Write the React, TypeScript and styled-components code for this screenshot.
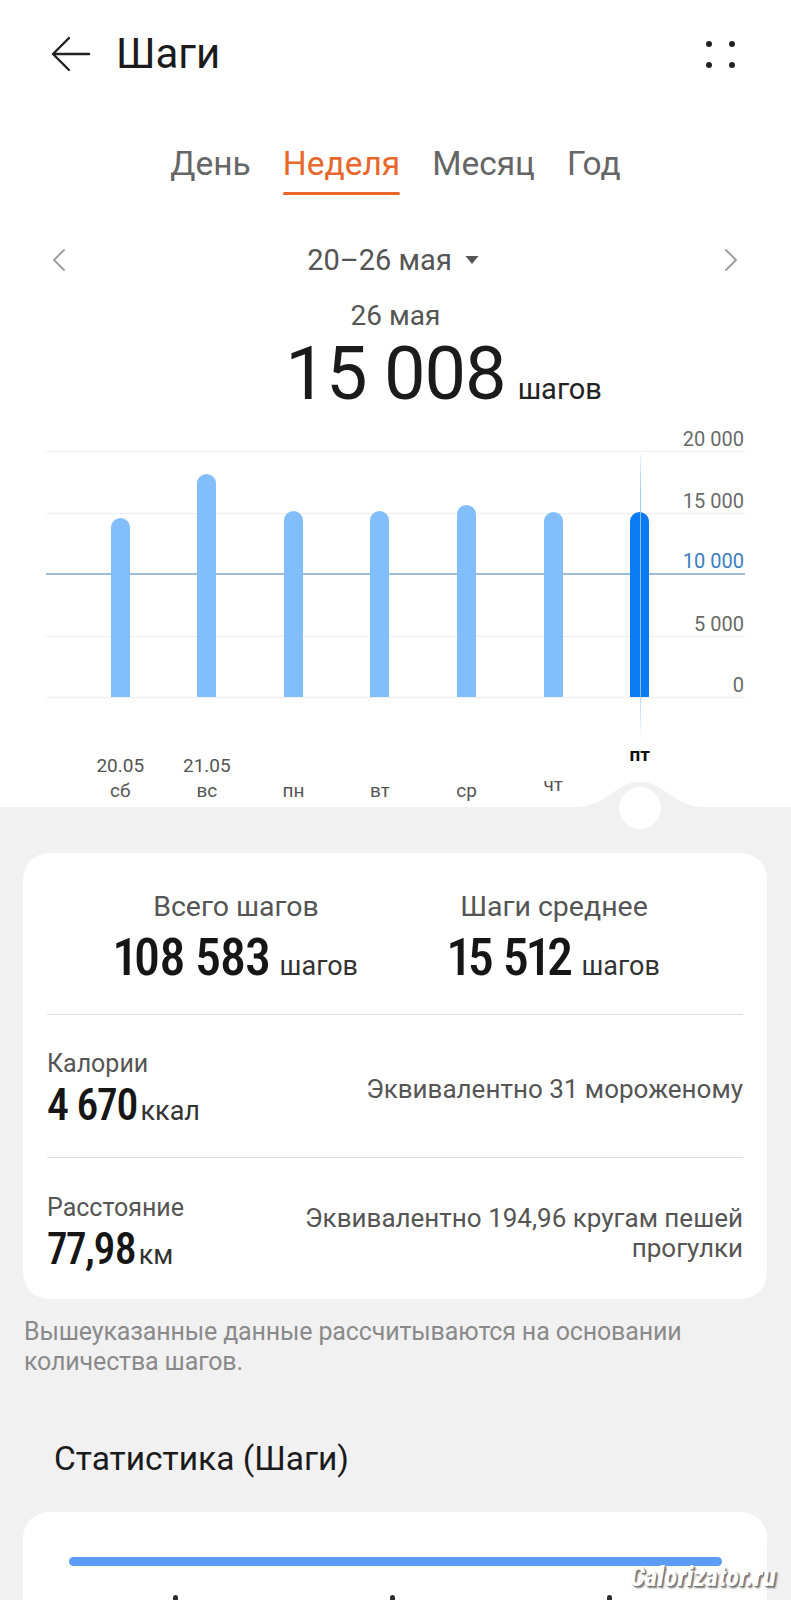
import React from "react";
import styled, { createGlobalStyle } from "styled-components";

const GlobalStyle = createGlobalStyle`
  html, body {
    margin: 0;
    padding: 0;
    overflow: hidden;
    background: #f1f1f1;
  }
  body {
    font-family: Roboto, "Noto Sans", sans-serif;
    color: #222;
  }
  * { box-sizing: border-box; }
`;

const Page = styled.div`
  width: 791px;
  height: 1600px;
  position: relative;
  overflow: hidden;
`;

const Top = styled.section`
  background: #fff;
  display: flex;
  flex-direction: column;
`;

const Header = styled.header`
  height: 108px;
  display: flex;
  align-items: center;
  padding: 0 56px 0 51px;
`;

const Title = styled.h1`
  margin: 0 0 0 25px;
  font-size: 42px;
  line-height: 52px;
  font-weight: 400;
  color: #1b1b1b;
  flex: 1;
`;

const Tabs = styled.nav`
  margin-top: 35px;
  display: flex;
  justify-content: center;
  gap: 32px;
`;

const Tab = styled.div<{ $active?: boolean }>`
  font-size: 33.5px;
  line-height: 41px;
  color: ${(p) => (p.$active ? "#e8672c" : "#666")};
  &::after {
    content: "";
    display: block;
    height: 3px;
    margin-top: 8px;
    border-radius: 2px;
    background: ${(p) => (p.$active ? "#e8672c" : "transparent")};
  }
`;

const DateNav = styled.div`
  margin-top: 45px;
  height: 40px;
  display: flex;
  align-items: center;
  justify-content: space-between;
  padding: 0 54px 0 53px;
`;

const Range = styled.div`
  display: flex;
  align-items: center;
  gap: 13px;
  font-size: 29px;
  color: #555;
  margin-right: 4px;
`;

const DayLabel = styled.div`
  margin-top: 18px;
  text-align: center;
  font-size: 28px;
  line-height: 36px;
  color: #555;
`;

const BigRow = styled.div`
  display: grid;
  grid-template-columns: 1fr auto 1fr;
  align-items: baseline;
`;

const BigNumber = styled.span`
  grid-column: 2;
  font-size: 74px;
  line-height: 80px;
  font-weight: 400;
  color: #1b1b1b;
  letter-spacing: -1px;
`;

const BigUnit = styled.span`
  font-size: 29px;
  color: #222;
  margin-left: 12px;
`;

const ChartSection = styled.div`
  position: relative;
  margin-top: 14px;
  padding: 0 46px;
`;

const ChartArea = styled.div`
  position: relative;
  display: flex;
  flex-direction: column;
`;

const GridRow = styled.div<{ $h: number; $accent?: boolean }>`
  height: ${(p) => p.$h}px;
  display: flex;
  justify-content: flex-end;
  align-items: flex-end;
  border-bottom: ${(p) => (p.$accent ? "2px solid #9fbdd4" : "1px solid #efefef")};
  font-size: 20px;
  line-height: 24px;
  color: ${(p) => (p.$accent ? "#3b7dc0" : "#6a6a6a")};
  padding-right: 1px;
`;

const Bars = styled.div`
  position: absolute;
  left: 31px;
  right: 62px;
  bottom: 1px;
  top: 0;
  display: grid;
  grid-template-columns: repeat(7, 1fr);
  align-items: end;
  justify-items: center;
`;

const Bar = styled.div<{ $selected?: boolean }>`
  width: 19px;
  border-radius: 9.5px 9.5px 0 0;
  background: ${(p) => (p.$selected ? "#0a7bf2" : "#82bdfc")};
`;

const Indicator = styled.div`
  position: absolute;
  left: 640px;
  top: 26px;
  width: 1px;
  height: 286px;
  background: linear-gradient(
    to bottom,
    rgba(150, 200, 245, 0.15) 0%,
    rgba(150, 200, 245, 0.9) 12%,
    rgba(150, 200, 245, 0.9) 82%,
    rgba(150, 200, 245, 0) 100%
  );
`;

const LabelRow = styled.div`
  height: 109px;
  padding: 0 62px 0 31px;
  display: grid;
  grid-template-columns: repeat(7, 1fr);
  align-items: end;
`;

const LabelCol = styled.div<{ $lift: number; $selected?: boolean }>`
  display: flex;
  flex-direction: column;
  align-items: center;
  margin-bottom: ${(p) => 4 + p.$lift}px;
  font-size: 19px;
  line-height: 25px;
  color: ${(p) => (p.$selected ? "#111" : "#555")};
  font-weight: ${(p) => (p.$selected ? 700 : 400)};
`;

const Gray = styled.section`
  position: relative;
  padding: 46px 24px 0 23px;
  display: flex;
  flex-direction: column;
`;

const Knob = styled.svg`
  position: absolute;
  left: 575px;
  top: -27px;
`;

const Card = styled.div`
  background: #fff;
  border-radius: 26px;
  padding: 0 24px;
  position: relative;
`;

const TopStats = styled.div`
  height: 162px;
  padding-top: 37px;
  display: flex;
  justify-content: center;
  border-bottom: 1px solid #dedede;
`;

const StatCol = styled.div`
  width: 318px;
  display: flex;
  flex-direction: column;
  align-items: center;
`;

const StatLabel = styled.div<{ $small?: boolean }>`
  font-size: ${(p) => (p.$small ? 25 : 28.5)}px;
  line-height: ${(p) => (p.$small ? 30 : 34)}px;
  color: #555;
`;

const ValueLine = styled.div<{ $gap?: number }>`
  display: flex;
  align-items: baseline;
  gap: ${(p) => p.$gap ?? 10}px;
  margin-top: ${(p) => (p.$gap ? 3 : 6)}px;
`;

const Num = styled.span<{ $size: number }>`
  font-size: ${(p) => p.$size}px;
  line-height: ${(p) => p.$size + 3}px;
  font-weight: 500;
  font-stretch: 75%;
  font-variant-numeric: proportional-nums;
  letter-spacing: -1.5px;
  color: #161616;
`;

const Unit = styled.span`
  font-size: 27px;
  color: #333;
`;

const MetricRow = styled.div<{ $last?: boolean }>`
  height: ${(p) => (p.$last ? 141 : 143)}px;
  display: flex;
  align-items: center;
  justify-content: space-between;
  border-bottom: ${(p) => (p.$last ? "none" : "1px solid #dedede")};
  padding-top: ${(p) => (p.$last ? 8 : 5)}px;
`;

const MetricLeft = styled.div`
  display: flex;
  flex-direction: column;
`;

const Equivalent = styled.div`
  max-width: 445px;
  text-align: right;
  font-size: 26px;
  line-height: 30px;
  color: #555;
`;

const Note = styled.p`
  margin: 18px 0 0 1px;
  font-size: 25px;
  line-height: 30px;
  letter-spacing: -0.15px;
  color: #8a8a8a;
`;

const SectionTitle = styled.h2`
  margin: 62px 0 0 31px;
  font-size: 33.5px;
  line-height: 40px;
  font-weight: 400;
  color: #1b1b1b;
`;

const StatsCard = styled(Card)`
  margin-top: 33px;
  height: 200px;
  padding: 45px 45px 0 46px;
`;

const Progress = styled.div`
  height: 9px;
  border-radius: 5px;
  background: #5b9cf4;
`;

const Ticks = styled.div`
  margin-top: 29px;
  display: flex;
  gap: 212px;
  padding-left: 104px;
`;

const Tick = styled.span`
  width: 5px;
  height: 8px;
  border-radius: 2.5px;
  background: #2e2e2e;
`;

const Watermark = styled.div`
  position: absolute;
  right: -9px;
  top: 50px;
  font-family: Roboto, sans-serif;
  font-stretch: 75%;
  font-style: italic;
  font-weight: 800;
  font-size: 27px;
  line-height: 30px;
  letter-spacing: 0.2px;
  color: #fff;
  text-shadow: 1px 1px 0 #777, 2px 2px 2px rgba(0, 0, 0, 0.55);
`;

const days = [
  { d: "20.05", w: "сб", v: 14550, lift: 0 },
  { d: "21.05", w: "вс", v: 18130, lift: 0 },
  { d: "", w: "пн", v: 15100, lift: 0 },
  { d: "", w: "вт", v: 15150, lift: 0 },
  { d: "", w: "ср", v: 15600, lift: 0 },
  { d: "", w: "чт", v: 15045, lift: 6 },
  { d: "", w: "пт", v: 15008, lift: 36, sel: true },
];

const ticks = [
  { label: "20 000", h: 24 },
  { label: "15 000", h: 61.5 },
  { label: "10 000", h: 61.5, accent: true },
  { label: "5 000", h: 61.5 },
  { label: "0", h: 61.5 },
];

const BackArrow = () => (
  <svg width="40" height="36" viewBox="0 0 40 36" fill="none">
    <path d="M2 18H38M2 18L18 2M2 18L18 34" stroke="#222" strokeWidth="2.4" strokeLinecap="round" strokeLinejoin="round" />
  </svg>
);

const MoreDots = () => (
  <svg width="29" height="27" viewBox="0 0 29 27">
    <circle cx="3" cy="3" r="3" fill="#222" />
    <circle cx="26" cy="3" r="3" fill="#222" />
    <circle cx="3" cy="24" r="3" fill="#222" />
    <circle cx="26" cy="24" r="3" fill="#222" />
  </svg>
);

const Chevron = ({ dir }: { dir: "left" | "right" }) => (
  <svg width="12" height="22" viewBox="0 0 12 22" fill="none">
    <path
      d={dir === "left" ? "M11 1L1 11L11 21" : "M1 1L11 11L1 21"}
      stroke="#a0a0a0"
      strokeWidth="2"
      strokeLinecap="round"
      strokeLinejoin="round"
    />
  </svg>
);

const Caret = () => (
  <svg width="14" height="10" viewBox="0 0 14 10">
    <path d="M0.5 1H13.5L7 9Z" fill="#555" />
  </svg>
);

export default function App() {
  return (
    <>
      <GlobalStyle />
      <Page>
        <Top>
          <Header>
            <BackArrow />
            <Title>Шаги</Title>
            <MoreDots />
          </Header>
          <Tabs>
            <Tab>День</Tab>
            <Tab $active>Неделя</Tab>
            <Tab>Месяц</Tab>
            <Tab>Год</Tab>
          </Tabs>
          <DateNav>
            <Chevron dir="left" />
            <Range>
              20–26 мая
              <Caret />
            </Range>
            <Chevron dir="right" />
          </DateNav>
          <DayLabel>26 мая</DayLabel>
          <BigRow>
            <BigNumber>15 008</BigNumber>
            <BigUnit>шагов</BigUnit>
          </BigRow>
          <ChartSection>
            <ChartArea>
              {ticks.map((t) => (
                <GridRow key={t.label} $h={t.h} $accent={t.accent}>
                  {t.label}
                </GridRow>
              ))}
              <Bars>
                {days.map((d) => (
                  <Bar key={d.w} $selected={d.sel} style={{ height: `${(d.v / 20000) * 246}px` }} />
                ))}
              </Bars>
            </ChartArea>
            <Indicator />
            <LabelRow>
              {days.map((d) => (
                <LabelCol key={d.w} $lift={d.lift} $selected={d.sel}>
                  {d.d && <span>{d.d}</span>}
                  <span>{d.w}</span>
                </LabelCol>
              ))}
            </LabelRow>
          </ChartSection>
        </Top>
        <Gray>
          <Knob width="130" height="52" viewBox="0 0 130 52">
            <path d="M0 27 C 32 27, 40 2, 65 2 C 90 2, 98 27, 130 27 Z" fill="#f1f1f1" />
            <circle cx="65" cy="28" r="21" fill="#fff" />
          </Knob>
          <Card>
            <TopStats>
              <StatCol>
                <StatLabel>Всего шагов</StatLabel>
                <ValueLine>
                  <Num $size={52}>108 583</Num>
                  <Unit>шагов</Unit>
                </ValueLine>
              </StatCol>
              <StatCol>
                <StatLabel>Шаги среднее</StatLabel>
                <ValueLine>
                  <Num $size={52}>15 512</Num>
                  <Unit>шагов</Unit>
                </ValueLine>
              </StatCol>
            </TopStats>
            <MetricRow>
              <MetricLeft>
                <StatLabel $small>Калории</StatLabel>
                <ValueLine $gap={3}>
                  <Num $size={44}>4 670</Num>
                  <Unit>ккал</Unit>
                </ValueLine>
              </MetricLeft>
              <Equivalent>Эквивалентно 31 мороженому</Equivalent>
            </MetricRow>
            <MetricRow $last>
              <MetricLeft>
                <StatLabel $small>Расстояние</StatLabel>
                <ValueLine $gap={3}>
                  <Num $size={44}>77,98</Num>
                  <Unit>км</Unit>
                </ValueLine>
              </MetricLeft>
              <Equivalent>Эквивалентно 194,96 кругам пешей прогулки</Equivalent>
            </MetricRow>
          </Card>
          <Note>Вышеуказанные данные рассчитываются на основании количества шагов.</Note>
          <SectionTitle>Статистика (Шаги)</SectionTitle>
          <StatsCard>
            <Progress />
            <Ticks>
              <Tick />
              <Tick />
              <Tick />
            </Ticks>
            <Watermark>Calorizator.ru</Watermark>
          </StatsCard>
        </Gray>
      </Page>
    </>
  );
}
